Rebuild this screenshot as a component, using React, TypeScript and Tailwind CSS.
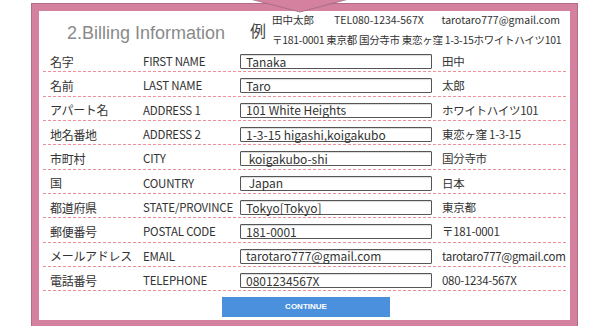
const rows = [
  { jp: "名字", en: "FIRST NAME", value: "Tanaka", ex: "田中" },
  { jp: "名前", en: "LAST NAME", value: "Taro", ex: "太郎" },
  { jp: "アパート名", en: "ADDRESS 1", value: "101 White Heights", ex: "ホワイトハイツ101" },
  { jp: "地名番地", en: "ADDRESS 2", value: "1-3-15 higashi,koigakubo", ex: "東恋ヶ窪 1-3-15" },
  { jp: "市町村", en: "CITY", value: " koigakubo-shi", ex: "国分寺市" },
  { jp: "国", en: "COUNTRY", value: " Japan", ex: "日本" },
  { jp: "都道府県", en: "STATE/PROVINCE", value: "Tokyo[Tokyo]", ex: "東京都" },
  { jp: "郵便番号", en: "POSTAL CODE", value: "181-0001", ex: "〒181-0001" },
  { jp: "メールアドレス", en: "EMAIL", value: "tarotaro777@gmail.com", ex: "tarotaro777@gmail.com" },
  { jp: "電話番号", en: "TELEPHONE", value: "0801234567X", ex: "080-1234-567X" },
];

const jpFont = "font-['Noto_Sans_CJK_JP',sans-serif]";

export default function App() {
  return (
    <div className="relative w-[600px] h-[326px] overflow-hidden bg-white">
      <div className="ml-[32px] mt-[4px] w-[545px] h-[323px] border-[7px] border-[#d4819f] shadow-[0_0_0_1px_#b56b88] bg-white">
        {/* header */}
        <div className="flex h-[37px] items-center">
          <h2 className="ml-[28px] w-[183px] shrink-0 pt-[7px] font-['Liberation_Sans',Arial,sans-serif] text-[18px] text-[#8a8a8a] leading-none">
            2.Billing Information
          </h2>
          <div className={`${jpFont} shrink-0 text-[16px] text-[#444] pt-[1px] leading-none w-[22px]`}>例</div>
          <div className={`${jpFont} w-[288px] shrink-0 text-[10.5px] text-[#333] leading-[20px]`}>
            <div className="flex">
              <span className="w-[62px]">田中太郎</span>
              <span>TEL080-1234-567X</span>
              <span className="ml-auto">tarotaro777@gmail.com</span>
            </div>
            <div className="whitespace-nowrap tracking-[-0.3px]">
              〒181-0001 東京都 国分寺市 東恋ヶ窪 1-3-15ホワイトハイツ101
            </div>
          </div>
        </div>

        {/* rows */}
        <div className={`${jpFont} mx-[4px] text-[#333]`}>
          {rows.map((r) => (
            <div
              key={r.en}
              className="flex h-[24.33px] items-center pt-[4px] border-b border-dashed border-[#f08e96]"
            >
              <div className="w-[100px] shrink-0 pl-[7px] text-[12px] leading-none whitespace-nowrap tracking-[-0.3px]">{r.jp}</div>
              <div className="w-[97px] shrink-0 text-[11.5px] leading-none whitespace-nowrap tracking-[-0.2px]">{r.en}</div>
              <div className="flex h-[15px] w-[192px] shrink-0 items-center rounded-[1px] border-[1.5px] border-[#555] px-[5px] text-[12px] leading-none whitespace-pre shadow-[inset_0_1px_1px_rgba(0,0,0,0.15)]">
                {r.value}
              </div>
              <div className="shrink-0 pl-[10px] text-[11.5px] leading-none whitespace-nowrap tracking-[-0.3px]">{r.ex}</div>
            </div>
          ))}
        </div>

        <div className="flex justify-center pl-[3px] pt-[6px]">
          <button className="flex h-[20px] w-[168px] items-center justify-center bg-[#4a90dc] font-['Liberation_Sans',Arial,sans-serif] text-[8px] font-bold text-white">
            CONTINUE
          </button>
        </div>
      </div>

      {/* pointer triangle over the frame */}
      <svg className="absolute left-[245px] top-0" width="110" height="16" viewBox="0 0 110 16">
        <polygon points="5,-1 104,-1 55,12" fill="#d4819f" stroke="#9c6b80" strokeWidth="0.8" />
      </svg>
    </div>
  );
}
